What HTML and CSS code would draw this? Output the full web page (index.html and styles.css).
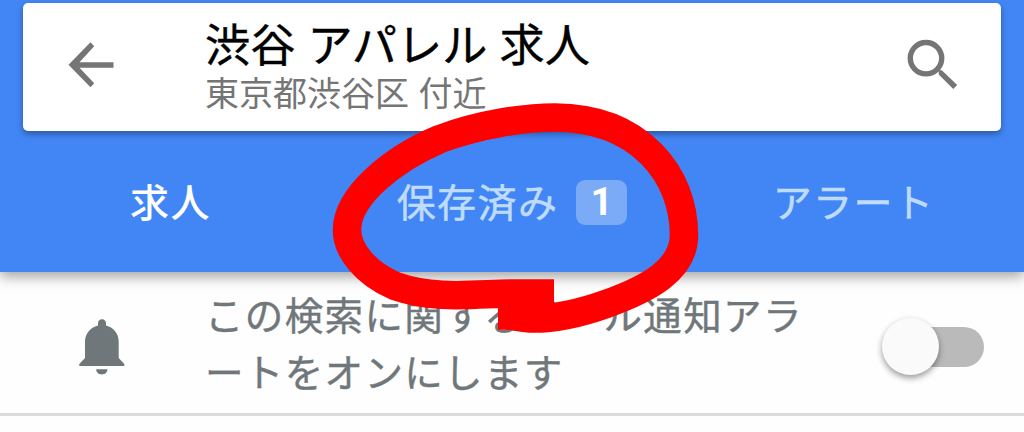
FILE: index.html
```
<!DOCTYPE html>
<html lang="ja">
<head>
    <meta charset="UTF-8">
    <meta name="viewport" content="width=device-width, initial-scale=1.0">
    <title>渋谷 アパレル 求人</title>
    <link rel="stylesheet" href="styles.css">
</head>
<body>
    <header class="header">
        <div class="search-card">
            <svg class="icon-back" viewBox="0 0 46 46">
                <path d="M45.5 20.2H11.5L26.2 4.2 22.5 0.2 0.5 22.8 22.5 45.2 26.2 41.3 11.5 25.7H45.5Z"/>
            </svg>
            <div class="search-text">
                <h1 class="search-title">渋谷 アパレル 求人</h1>
                <p class="search-area">東京都渋谷区 付近</p>
            </div>
            <svg class="icon-search" viewBox="0 0 50 50">
                <circle cx="18" cy="21.2" r="15.7"/>
                <path class="handle" d="M31.5 33.2L33.8 33.2 49.2 48 45.2 52 30.7 37.5V34.5L28.5 32.3 30 30.5Z"/>
            </svg>
        </div>

        <nav class="tabs">
            <div class="tab active">求人</div>
            <div class="tab">保存済み<span class="badge">1</span></div>
            <div class="tab">アラート</div>
        </nav>
    </header>

    <section class="alert-row">
        <svg class="icon-bell" viewBox="0 0 46 56">
            <path d="M23 0.3C20.4 0.3 19 2.2 19 4.5V6.5C11 8.5 6 15 6 23V39L0.3 45V47H45.3V45L39.7 39V23C39.7 15 35 8.5 27 6.5V4.5C27 2.2 25.5 0.3 23 0.3Z"/>
            <path d="M17.2 50.3H28.4C28.4 53.5 26 55.5 22.8 55.5S17.2 53.5 17.2 50.3Z"/>
        </svg>
        <p class="alert-text">この検索に関するメール通知アラ<br>ートをオンにします</p>
        <div class="toggle"><div class="knob"></div></div>
    </section>

    <!-- 手書きの赤丸 -->
    <svg class="marker" viewBox="0 0 1024 432">
        <path d="M554 293.5H510C475 294 435 300 395 286C365 273 347 250 347 230C347 195 395 158 440 139C480 124 525 117.5 555 117.5C640 118 684 175 684 235C684 270 648 289 606 304C578 314 550 319 530 318.5C520 318 515 316 508 315.5H498"/>
    </svg>
</body>
</html>
```
FILE: styles.css
```
* {
    box-sizing: border-box;
    margin: 0;
    padding: 0;
}

body {
    position: relative;
    height: 432px;
    overflow: hidden;
    background: #fefefe;
    font-family: "Noto Sans CJK JP", sans-serif;
}

.header {
    height: 272px;
    padding: 3px 23px 0;
    background: #4286f5;
    box-shadow: 0 5px 12px rgba(0,0,0,0.35);
}

.search-card {
    display: flex;
    align-items: flex-start;
    height: 128px;
    padding: 0 43px 0 45px;
    background: white;
    border-radius: 5px;
    box-shadow: 0 3px 6px rgba(0,0,0,0.35);
}

.icon-back {
    width: 46px;
    height: 46px;
    margin-top: 39px;
    fill: #757575;
}

.search-text {
    flex: 1;
    margin-left: 91px;
    padding-top: 13px;
}

.search-title {
    font-size: 45.2px;
    font-weight: 400;
    line-height: 54px;
    word-spacing: 2px;
    color: #000;
    -webkit-text-stroke: 0.4px #000;
}

.search-area {
    padding-top: 1px;
    font-size: 34px;
    font-weight: 400;
    line-height: 42px;
    word-spacing: 2px;
    color: #757575;
}

.icon-search {
    width: 50px;
    height: 50px;
    margin-top: 34px;
    overflow: visible;
    fill: none;
    stroke: #757575;
    stroke-width: 5.4;
}

.handle {
    fill: #757575;
    stroke: none;
}

.tabs {
    display: grid;
    grid-template-columns: 295px 388px 295px;
    height: 141px;
    padding-bottom: 4px;
}

.tab {
    display: flex;
    align-items: center;
    justify-content: center;
    font-size: 39px;
    letter-spacing: 1.4px;
    color: #bfdcff;
    -webkit-text-stroke: 0.5px #bfdcff;
}

.active {
    font-weight: 500;
    color: white;
    -webkit-text-stroke: 0;
}

.badge {
    width: 51px;
    height: 45px;
    margin: 6px 0 0 18px;
    border-radius: 9px;
    background: #7baaf7;
    font-family: Roboto, sans-serif;
    font-size: 39px;
    font-weight: 700;
    line-height: 44px;
    letter-spacing: 0;
    text-align: center;
    color: white;
    -webkit-text-stroke: 0;
}

.alert-row {
    display: flex;
    align-items: flex-start;
    height: 144px;
    padding: 0 40px 0 79px;
    border-bottom: 3px solid #dcdcdc;
}

.icon-bell {
    width: 46px;
    height: 56px;
    margin-top: 47px;
    fill: #70777a;
}

.alert-text {
    flex: 1;
    margin-left: 80px;
    padding-top: 13px;
    font-size: 38.5px;
    line-height: 57px;
    letter-spacing: 1.35px;
    color: #70777a;
    -webkit-text-stroke: 0.4px #70777a;
}

.toggle {
    width: 102px;
    height: 40px;
    margin-top: 55px;
    border-radius: 20px;
    background: linear-gradient(to right, transparent 30px, #bababa 30px);
}

.knob {
    width: 57px;
    height: 57px;
    margin-top: -9px;
    border-radius: 50%;
    background: #fafafa;
    box-shadow: 0 3px 6px rgba(0,0,0,0.4);
}

.marker {
    position: absolute;
    top: 0;
    left: 0;
    width: 1024px;
    height: 432px;
    fill: none;
    stroke: #fe0000;
    stroke-width: 28.5;
}
```
